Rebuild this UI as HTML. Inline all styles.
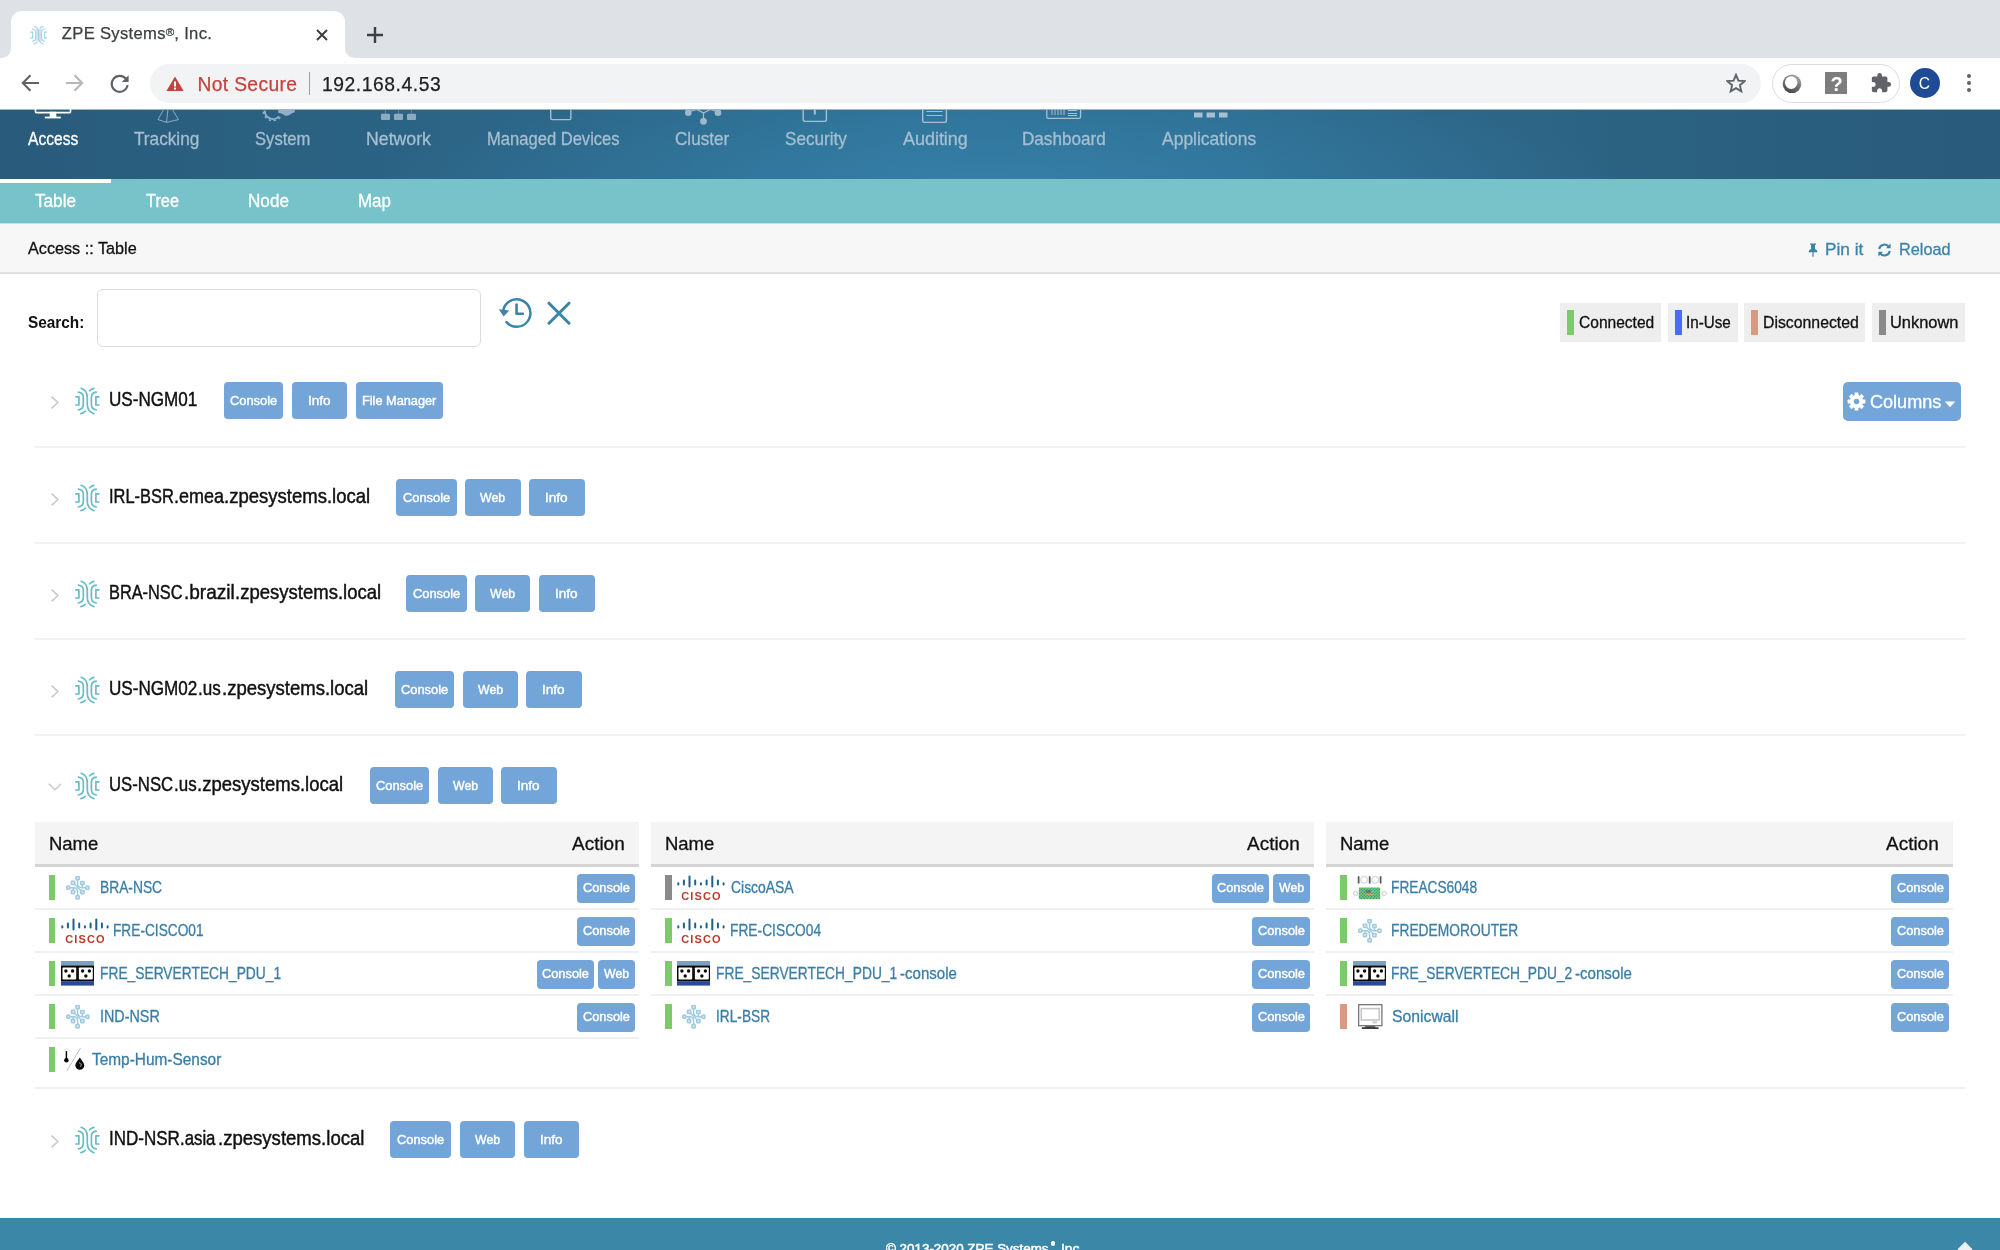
<!DOCTYPE html>
<html><head><meta charset="utf-8"><title>ZPE Systems, Inc.</title>
<style>
*{box-sizing:border-box;margin:0;padding:0}
html,body{width:2000px;height:1250px;overflow:hidden;background:#fff;font-family:"Liberation Sans",sans-serif;}
.abs{position:absolute}
.t{position:absolute;white-space:nowrap;line-height:1;transform-origin:0 0;}
#tabstrip{position:absolute;left:0;top:0;width:2000px;height:58px;background:#dee1e6}
#tab{position:absolute;left:11px;top:11px;width:334px;height:47px;background:#fff;border-radius:11px 11px 0 0}
#toolbar{position:absolute;left:0;top:58px;width:2000px;height:52px;background:#fff;border-bottom:1px solid #9fb5c4}
#omni{position:absolute;left:150px;top:64px;width:1611px;height:39px;border-radius:20px;background:#f1f3f4}
#nav{position:absolute;left:0;top:110px;width:2000px;height:69px;background:radial-gradient(ellipse 620px 110px at 50% 110%,rgba(60,140,182,0.55),rgba(60,140,182,0) 100%),linear-gradient(90deg,#295b7b 0%,#2b6384 20%,#2e7095 45%,#2e6e92 60%,#2b6080 85%,#295b7b 100%)}
#sub{position:absolute;left:0;top:179px;width:2000px;height:44px;background:#78c3ca}
#crumb{position:absolute;left:0;top:223px;width:2000px;height:51px;background:#f7f7f7;border-bottom:2px solid #e1e1e1;border-top:1px solid #c9dfe2}
#footer{position:absolute;left:0;top:1218px;width:2000px;height:32px;background:#3a87a8}
.btn{position:absolute;background:#74a5d9;color:#fff;border-radius:4px;text-align:center;white-space:nowrap;font-weight:bold}
.sep{position:absolute;left:35px;width:1930px;height:2px;background:#f1f1f1}
#root{position:absolute;left:0;top:0;width:2000px;height:1250px;overflow:hidden;will-change:transform;}

</style></head><body>
<svg width="0" height="0" style="position:absolute">
<defs>
<symbol id="zpe" viewBox="0 0 25 28">
<g fill="none" stroke="currentColor" stroke-width="1.7" stroke-linecap="round" stroke-linejoin="round">
<path d="M6.2 1.3 C10.5 2.8 12.3 6.5 12.3 10.5 L12.3 17.5 C12.3 21.5 14.5 25 19 26.7"/>
<path d="M3.4 5.2 C6.6 5.6 8.3 7.6 8.3 10.2 L8.3 17.6 C8.3 20.4 6.6 22.4 3.4 22.8"/>
<path d="M0.9 9.8 H3.9 V18 H0.9"/>
<path d="M5.9 26.6 C7.8 26.2 9.2 25.3 10.2 24.2"/>
<path d="M14.6 3.8 C15.6 2.7 17 1.8 18.9 1.4"/>
<path d="M21.2 5.2 C18 5.6 16.4 7.6 16.4 10.2 L16.4 17.6 C16.4 20.4 18 22.4 21.2 22.8"/>
<path d="M23.9 9.8 H20.9 V18 H23.9"/>
</g></symbol>
<symbol id="node" viewBox="0 0 24 24">
<g fill="none" stroke="#9fcadf" stroke-width="1.45" stroke-linecap="round">
<g fill="#d4e8f2" stroke="none"><rect x="9.9" y="0.6" width="3.4" height="3.2"/><rect x="5.3" y="5.2" width="3.4" height="3.2"/><rect x="14.7" y="5.4" width="3.4" height="3.2"/><rect x="0.7" y="10" width="3.3" height="3.3"/><rect x="19.7" y="10" width="3.4" height="3.4"/><rect x="5.3" y="14.5" width="3.4" height="3.2"/><rect x="14.7" y="14.5" width="3.4" height="3.2"/><rect x="9.9" y="19.6" width="3.4" height="3.3"/></g>
<path d="M11.6 3.8 V7.5 C11.6 10 13.5 11.7 16 11.7 H19.5"/>
<path d="M16.4 8.8 V11.5"/>
<path d="M8.8 8.4 L14.8 14.4"/>
<path d="M4 11.7 H7.2 C9.8 11.7 11.7 13.5 11.7 16 V19.5"/>
<path d="M7.2 14.3 V11.9"/>
<rect x="9.9" y="0.6" width="3.4" height="3.2" rx="0.6"/>
<rect x="5.3" y="5.2" width="3.4" height="3.2" rx="0.6"/>
<rect x="14.7" y="5.4" width="3.4" height="3.2" rx="0.6"/>
<rect x="0.7" y="10" width="3.3" height="3.3" rx="1.2"/>
<rect x="19.7" y="10" width="3.4" height="3.4" rx="1.2"/>
<rect x="5.3" y="14.5" width="3.4" height="3.2" rx="0.6"/>
<rect x="14.7" y="14.5" width="3.4" height="3.2" rx="0.6"/>
<rect x="9.9" y="19.6" width="3.4" height="3.3" rx="0.6"/>
</g></symbol>
<symbol id="cisco" viewBox="0 0 48 26">
<g stroke="#1f6085" stroke-width="2" stroke-linecap="round">
<path d="M1.3 8.2V9.6M6.9 5.4V9.6M12.5 1.4V11.6M18.2 5.4V9.6M23.9 8.2V9.6M29.6 5.4V9.6M35.3 1.4V11.6M40.9 5.4V9.6M46.6 8.2V9.6"/>
</g>
<text x="4.3" y="24.7" font-family="Liberation Sans, sans-serif" font-weight="bold" font-size="11" fill="#c0392f" textLength="39.3" lengthAdjust="spacing">CISCO</text>
</symbol>
<symbol id="pdu" viewBox="0 0 33.2 24.8">
<rect x="0" y="0" width="33.2" height="5" fill="#7da0be"/>
<rect x="0" y="4.6" width="33.2" height="15.8" fill="#0b0b0b"/>
<rect x="0" y="20.2" width="33.2" height="4.6" fill="#274b99"/>
<rect x="1.5" y="6.4" width="13.7" height="12.2" rx="0.8" fill="#fff"/>
<rect x="17.9" y="6.4" width="13.9" height="12.2" rx="0.8" fill="#fff"/>
<g fill="#0b0b0b"><circle cx="4.9" cy="10" r="1.7"/><circle cx="11.6" cy="10" r="1.7"/><circle cx="8.2" cy="15" r="1.7"/>
<circle cx="21.6" cy="10" r="1.7"/><circle cx="28.4" cy="10" r="1.7"/><circle cx="24.9" cy="15" r="1.7"/></g>
</symbol>
<pattern id="dots" width="3" height="3" patternUnits="userSpaceOnUse"><rect width="3" height="3" fill="#6fd15f"/><rect x="0.2" y="0.2" width="1.1" height="1.1" fill="#2a72c4"/><rect x="1.7" y="1.7" width="1.1" height="1.1" fill="#2a72c4"/></pattern>
<symbol id="acs" viewBox="0 0 34 25">
<g fill="none"><path d="M5.6 1.2V8.4M16.7 1.2V8.4M27.6 1.2V8.4" stroke="#555" stroke-width="1.7"/>
<ellipse cx="11.1" cy="4.8" rx="3.3" ry="3.4" stroke="#d9d9d9" stroke-width="1.3"/><ellipse cx="22.2" cy="4.8" rx="3.3" ry="3.4" stroke="#d9d9d9" stroke-width="1.3"/>
<circle cx="2.6" cy="18.4" r="2.1" stroke="#d6d6d6" stroke-width="1.2"/><circle cx="31.4" cy="18.4" r="2.1" stroke="#d6d6d6" stroke-width="1.2"/></g>
<rect x="5.8" y="12.6" width="21.4" height="11.6" rx="0.8" fill="url(#dots)"/>
<path d="M13.2 17.6 V14.6 L15 16.4 L16.6 14.8 L17.8 16.4 V17.6Z" fill="#6a5a6a"/>
<rect x="11" y="16.2" width="1.4" height="1" fill="#d9534f"/><rect x="18.6" y="16" width="2.4" height="0.9" fill="#e9a08f"/><rect x="13.4" y="19" width="7" height="0.9" fill="#e9a08f" opacity=".8"/>
</symbol>
<symbol id="mon" viewBox="0 0 25 26">
<rect x="0.7" y="0.7" width="23.2" height="21" fill="#fff" stroke="#6b6b6b" stroke-width="1.2"/>
<rect x="3.3" y="4.6" width="18" height="11.4" fill="#fff" stroke="#c4c6c4" stroke-width="1.6"/>
<rect x="14.5" y="17.4" width="4.8" height="2" fill="#c8c8c8"/>
<path d="M7.5 22.3 L6.8 23.2 H3.8 V24.9 H20.6 V23.2 H17.6 L16.9 22.3Z" fill="#3c3c3c"/>
</symbol>
<symbol id="temp" viewBox="0 0 24 25">
<circle cx="4.4" cy="3.2" r="1.7" fill="none" stroke="#ddd" stroke-width="0.9"/>
<path d="M4.4 4.8 V13" stroke="#000" stroke-width="1.4" stroke-linecap="round"/><circle cx="4.4" cy="13.3" r="2.2" fill="#000"/>
<path d="M18.4 1.2 L4.8 24" stroke="#bdbdbd" stroke-width="1"/>
<path d="M17.8 10.4 C19.4 13 22.3 15.6 22.3 18.3 A4.5 4.5 0 0 1 13.3 18.3 C13.3 15.600 16.200 13 17.800 10.400Z" fill="#0a0a0a"/>
<path d="M17 15.500 L19.500 17.500 L18.500 20" stroke="#777" stroke-width="1.2" fill="none"/>
</symbol>
</defs></svg>

<div id="root">
<div id="tabstrip"></div>
<div id="tab"></div>
<div id="toolbar"></div>
<div id="omni"></div>

<!-- tab curves -->
<svg class="abs" style="left:0;top:46px" width="360" height="12"><path d="M0 12 Q11 12 11 1 L11 12Z" fill="#fff"/><path d="M345 1 Q345 12 357 12 L345 12Z" fill="#fff"/></svg>
<!-- favicon -->
<svg class="abs" style="left:30px;top:24.600px;color:#a6d2e6" width="17.400" height="20.200" viewBox="0 0 25 28"><rect x="9" y="5" width="7" height="18" fill="#cfe6f1"/><use href="#zpe"/></svg>
<span class="t" id="tabtitle" style="left:61.8px;top:26px;font-size:16.6px;letter-spacing:0.32px;-webkit-text-stroke:0.25px #3c4043;color:#3c4043">ZPE Systems<span style="font-size:11.5px;position:relative;top:-3.5px;letter-spacing:0">&reg;</span>, Inc.</span>
<svg class="abs" style="left:315px;top:28px" width="14" height="14" viewBox="0 0 14 14" stroke="#3c4043" stroke-width="2" fill="none"><path d="M2 2 L12 12 M12 2 L2 12"/></svg>
<svg class="abs" style="left:366px;top:26px" width="18" height="18" viewBox="0 0 18 18" stroke="#3c4043" stroke-width="2.4" fill="none"><path d="M9 1 V17 M1 9 H17"/></svg>
<!-- nav buttons -->
<svg class="abs" style="left:21px;top:74px" width="19" height="18" viewBox="0 0 19 18" stroke="#5f6368" stroke-width="2.1" fill="none"><path d="M18 9 H2 M9.5 1.2 L1.8 9 L9.5 16.8"/></svg>
<svg class="abs" style="left:65px;top:74px" width="19" height="18" viewBox="0 0 19 18" stroke="#b4b7bb" stroke-width="2.1" fill="none"><path d="M1 9 H17 M9.5 1.2 L17.2 9 L9.5 16.8"/></svg>
<svg class="abs" style="left:109px;top:73px" width="22" height="21" viewBox="0 0 22 21" fill="none"><path d="M17.2 6.2 A8 8 0 1 0 18.6 12.2" stroke="#5f6368" stroke-width="2.1"/><path d="M19.6 2.2 V9 H12.8 Z" fill="#5f6368"/></svg>
<!-- warning -->
<svg class="abs" style="left:166px;top:76px" width="18" height="16" viewBox="0 0 18 16"><path d="M9 0.6 L17.6 15 H0.4 Z" fill="#c5433e"/><rect x="8" y="5.5" width="2" height="5" fill="#fff"/><rect x="8" y="11.6" width="2" height="2" fill="#fff"/></svg>
<span class="t" id="notsecure" style="left:197.5px;top:74.6px;font-size:19.3px;letter-spacing:0.33px;-webkit-text-stroke:0.25px #c5433e;color:#c5433e">Not Secure</span>
<div class="abs" style="left:309px;top:72px;width:1px;height:23px;background:#9aa0a6"></div>
<span class="t" id="url" style="left:322px;top:74.6px;font-size:19.3px;letter-spacing:0.55px;-webkit-text-stroke:0.25px #202124;color:#202124">192.168.4.53</span>
<!-- star -->
<svg class="abs" style="left:1726px;top:73px" width="20" height="20" viewBox="0 0 20 20" fill="none" stroke="#5f6368" stroke-width="1.9" stroke-linejoin="miter"><path d="M10 1.8 L12.4 7.6 L18.6 8.1 L13.9 12.2 L15.3 18.3 L10 15.1 L4.7 18.3 L6.1 12.2 L1.4 8.1 L7.6 7.6 Z"/></svg>
<!-- ext pill -->
<div class="abs" style="left:1772px;top:64px;width:128px;height:39px;border-radius:20px;border:1px solid #dadce0;background:#fff"></div>
<svg class="abs" style="left:1781px;top:73px" width="22" height="22" viewBox="0 0 22 22"><defs><linearGradient id="sph" x1="0.7" y1="0" x2="0.2" y2="1"><stop offset="0" stop-color="#a8a8a8"/><stop offset="0.55" stop-color="#6a6a6a"/><stop offset="1" stop-color="#444"/></linearGradient></defs><circle cx="11" cy="10.8" r="9.3" fill="url(#sph)"/><circle cx="10.2" cy="9.6" r="6.3" fill="#fff"/></svg>
<div class="abs" style="left:1825px;top:72px;width:22px;height:22px;background:#7d7d7d"></div>
<span class="t" style="left:1830.5px;top:73.5px;font-size:20px;font-weight:bold;color:#fff">?</span>
<svg class="abs" style="left:1870px;top:72px" width="22" height="22" viewBox="0 0 24 24"><path fill="#5f6368" d="M20.5 11H19V7c0-1.1-.9-2-2-2h-4V3.5a2.5 2.5 0 0 0-5 0V5H4c-1.1 0-2 .9-2 2v3.8h1.5c1.5 0 2.7 1.2 2.7 2.7S5 16.200 3.500 16.200H2V20c0 1.100.9 2 2 2h3.800v-1.500c0-1.500 1.200-2.700 2.700-2.700s2.700 1.200 2.700 2.700V22H17c1.100 0 2-.9 2-2v-4h1.500a2.500 2.500 0 0 0 0-5z"/></svg>
<div class="abs" style="left:1910px;top:68px;width:30px;height:30px;border-radius:15px;background:#1f4a96"></div>
<span class="t" style="left:1918.8px;top:75.5px;font-size:15.6px;color:#fff">C</span>
<div class="abs" style="left:1967px;top:74px;width:4px;height:4px;border-radius:2px;background:#5f6368"></div>
<div class="abs" style="left:1967px;top:81px;width:4px;height:4px;border-radius:2px;background:#5f6368"></div>
<div class="abs" style="left:1967px;top:88px;width:4px;height:4px;border-radius:2px;background:#5f6368"></div>

<div id="nav"></div><svg class="abs" style="left:0;top:109px" width="1300" height="18" viewBox="0 109 1300 18" fill="none">
<g stroke="#fff" stroke-width="1.6"><path d="M35.5 104 V111.8 Q35.500 112.600 36.300 112.600 H69.700 Q70.500 112.600 70.500 111.800 V104"/><path d="M50.5 112.600 H55.500 V116.600 H50.500Z" fill="#fff"/><path d="M44.800 117.500 H60.800" stroke-width="1.8"/></g>
<g stroke="#8dabc1" stroke-width="1"><path d="M164 109 L158 119.500 L166.500 122.400 L178.500 119.500 L172 109 M168 109 L166.500 122.400"/></g>
<g stroke="#8fb0c8" fill="none"><path d="M264.80 110.51 A8.2 8.2 0 0 0 279.09 116.29" stroke-width="1.900"/><path d="M263.24 111.65 A9.8 9.8 0 0 0 280.72 116.83" stroke-width="1.600" stroke-dasharray="2.400 2.600"/></g>
<path d="M278.200 110 H294.800 V112.300 Q292 112.800 290.600 114.300 Q288.200 116.400 285 115.500 Q282.400 113.400 278.200 112.800Z" fill="#8fb0c8"/>
<g fill="#8eaac0"><rect x="381" y="113.800" width="9" height="6.200" rx="1"/><rect x="394" y="113.800" width="9" height="6.200" rx="1"/><rect x="407" y="113.800" width="9" height="6.200" rx="1"/><rect x="385" y="110" width="0.800" height="4" opacity=".6"/><rect x="398" y="110" width="0.800" height="4" opacity=".6"/><rect x="411" y="110" width="0.800" height="4" opacity=".6"/></g>
<g stroke="#a6bfd1" stroke-width="1.400"><path d="M550.700 105 V118.200 Q550.700 119.600 552.100 119.600 H569.500 Q570.900 119.600 570.900 118.200 V105"/></g>
<g fill="#9fbace" stroke="#9fbace"><circle cx="688.300" cy="112.800" r="3.300" stroke="none"/><circle cx="718" cy="112.800" r="3.300" stroke="none"/><circle cx="703.500" cy="121.300" r="3.400" stroke="none"/><path d="M703.500 121 V113 L694 108 M703.500 113 L713 108 M690 111.500 L697 109.500 M717 111.500 L710 109.500" stroke-width="1.300" fill="none"/></g>
<g stroke="#a6bfd1" stroke-width="1.400"><path d="M803.200 105 V119.600 Q803.200 121.400 805 121.400 H824.600 Q826.400 121.400 826.400 119.600 V105"/><path d="M814.800 109 V114.500" stroke-width="2"/></g>
<g stroke="#a6bfd1" stroke-width="1.400"><path d="M922.700 105 V120.600 Q922.700 122.400 924.500 122.400 H944.600 Q946.400 122.400 946.400 120.600 V105"/><path d="M926.500 111.500 H942.500 M926.500 115.500 H942.500" stroke-width="1.100"/></g>
<g stroke="#a6bfd1" stroke-width="1.300"><path d="M1046.800 105 V116.800 Q1046.800 118.400 1048.400 118.400 H1079 Q1080.600 118.400 1080.600 116.800 V105"/><path d="M1052 109 V115 M1055 109 V115 M1058 109 V115 M1061 109 V115 M1064 109 V115" stroke-width="1"/><path d="M1068 110.500 H1077 M1068 113.500 H1077 M1068 115.500 H1077" stroke-width="1.200"/></g>
<g fill="#a6bfd1"><rect x="1194" y="112.500" width="8.500" height="5" /><rect x="1206.500" y="112.500" width="8.500" height="5"/><rect x="1219" y="112.500" width="8.500" height="5"/></g>
</svg><span class="t" style="left:28.00px;top:129.59px;font-size:18.5px;color:#fff;transform:scaleX(0.8421);-webkit-text-stroke:0.3px #fff;">Access</span><span class="t" style="left:134.00px;top:129.59px;font-size:18.5px;color:#a6bfd1;transform:scaleX(0.9291);-webkit-text-stroke:0.3px #a6bfd1;">Tracking</span><span class="t" style="left:255.00px;top:129.59px;font-size:18.5px;color:#a6bfd1;transform:scaleX(0.8977);-webkit-text-stroke:0.3px #a6bfd1;">System</span><span class="t" style="left:365.84px;top:129.59px;font-size:18.5px;color:#a6bfd1;transform:scaleX(0.9571);-webkit-text-stroke:0.3px #a6bfd1;">Network</span><span class="t" style="left:486.60px;top:129.59px;font-size:18.5px;color:#a6bfd1;transform:scaleX(0.8956);-webkit-text-stroke:0.3px #a6bfd1;">Managed Devices</span><span class="t" style="left:675.00px;top:129.59px;font-size:18.5px;color:#a6bfd1;transform:scaleX(0.9241);-webkit-text-stroke:0.3px #a6bfd1;">Cluster</span><span class="t" style="left:784.50px;top:129.59px;font-size:18.5px;color:#a6bfd1;transform:scaleX(0.9249);-webkit-text-stroke:0.3px #a6bfd1;">Security</span><span class="t" style="left:902.50px;top:129.59px;font-size:18.5px;color:#a6bfd1;transform:scaleX(0.9690);-webkit-text-stroke:0.3px #a6bfd1;">Auditing</span><span class="t" style="left:1022.08px;top:129.59px;font-size:18.5px;color:#a6bfd1;transform:scaleX(0.9247);-webkit-text-stroke:0.3px #a6bfd1;">Dashboard</span><span class="t" style="left:1162.00px;top:129.59px;font-size:18.5px;color:#a6bfd1;transform:scaleX(0.9447);-webkit-text-stroke:0.3px #a6bfd1;">Applications</span><div id="sub"></div><div class="abs" style="left:0;top:179px;width:111px;height:4px;background:#fff"></div><span class="t" style="left:35.00px;top:192.26px;font-size:18px;color:#fff;transform:scaleX(0.9530);-webkit-text-stroke:0.3px #fff;">Table</span><span class="t" style="left:146.00px;top:192.26px;font-size:18px;color:#fff;transform:scaleX(0.9083);-webkit-text-stroke:0.3px #fff;">Tree</span><span class="t" style="left:248.05px;top:192.26px;font-size:18px;color:#fff;transform:scaleX(0.9519);-webkit-text-stroke:0.3px #fff;">Node</span><span class="t" style="left:358.06px;top:192.26px;font-size:18px;color:#fff;transform:scaleX(0.9410);-webkit-text-stroke:0.3px #fff;">Map</span><div id="crumb"></div><span class="t" style="left:27.60px;top:239.94px;font-size:17.2px;color:#111;transform:scaleX(0.9424);-webkit-text-stroke:0.3px #111;">Access :: Table</span><svg class="abs" style="left:1807px;top:243px" width="12" height="15" viewBox="0 0 12 15"><path d="M3 0.500 H9 V1.800 H8 V6 Q10.500 7 10.500 9.200 H6.600 V13 L6 14.500 L5.400 13 V9.200 H1.500 Q1.500 7 4 6 V1.800 H3Z" fill="#3a84aa"/></svg><span class="t" style="left:1825.15px;top:241.22px;font-size:16.4px;color:#3a84aa;transform:scaleX(1.0534);-webkit-text-stroke:0.3px #3a84aa;">Pin it</span><svg class="abs" style="left:1877px;top:243px" width="15" height="14" viewBox="0 0 15 14" fill="none" stroke="#3a84aa" stroke-width="2.100"><path d="M2.200 6 A5.400 5.400 0 0 1 11.800 3.600"/><path d="M12.800 8 A5.400 5.400 0 0 1 3.200 10.400"/><path d="M13.600 0.600 V5.200 H9Z" fill="#3a84aa" stroke="none"/><path d="M1.400 13.400 V8.800 H6Z" fill="#3a84aa" stroke="none"/></svg><span class="t" style="left:1898.61px;top:241.22px;font-size:16.4px;color:#3a84aa;transform:scaleX(0.9916);-webkit-text-stroke:0.3px #3a84aa;">Reload</span><span class="t" style="left:28.00px;top:313.62px;font-size:16.4px;color:#111;transform:scaleX(0.9374);font-weight:bold;">Search:</span><div class="abs" style="left:97px;top:289px;width:384px;height:58px;border:1px solid #dcdcdc;border-radius:6px;background:#fff"></div><svg class="abs" style="left:497px;top:296px;overflow:visible" width="37" height="34" viewBox="-1 0 37 34" fill="none" stroke="#3a84aa" stroke-width="2.500"><path d="M5.250 14.450 A13.700 13.700 0 1 1 8.410 26.100" stroke-linecap="round"/><path d="M0.700 13.300 L11.300 14.600 L5.700 20.600Z" fill="#3a84aa" stroke="none"/><path d="M18.550 8.500 V17.800 H24.900" stroke-width="2.600" stroke-linecap="round" stroke-linejoin="round"/></svg><svg class="abs" style="left:547px;top:301px" width="25" height="25" viewBox="0 0 25 25" fill="none" stroke="#3a84aa" stroke-width="3" stroke-linecap="round"><path d="M2 2.200 L22 22.200 M22 2.200 L2 22.200"/></svg><div class="abs" style="left:1560px;top:303px;width:101px;height:38.500px;background:#eeeeee"></div><div class="abs" style="left:1567px;top:310px;width:7px;height:24.500px;background:#7cca6c"></div><span class="t" style="left:1578.60px;top:314.94px;font-size:15.9px;color:#111;transform:scaleX(0.9786);-webkit-text-stroke:0.3px #111;">Connected</span><div class="abs" style="left:1668px;top:303px;width:70px;height:38.500px;background:#eeeeee"></div><div class="abs" style="left:1675px;top:310px;width:7px;height:24.500px;background:#4a6cf7"></div><span class="t" style="left:1686.04px;top:314.94px;font-size:15.9px;color:#111;transform:scaleX(0.9572);-webkit-text-stroke:0.3px #111;">In-Use</span><div class="abs" style="left:1744.3px;top:303px;width:121.10000000000014px;height:38.500px;background:#eeeeee"></div><div class="abs" style="left:1751px;top:310px;width:7px;height:24.500px;background:#d79b84"></div><span class="t" style="left:1763.00px;top:314.94px;font-size:15.9px;color:#111;transform:scaleX(0.9953);-webkit-text-stroke:0.3px #111;">Disconnected</span><div class="abs" style="left:1872px;top:303px;width:93px;height:38.500px;background:#eeeeee"></div><div class="abs" style="left:1879px;top:310px;width:7px;height:24.500px;background:#8a8a8a"></div><span class="t" style="left:1890.37px;top:314.94px;font-size:15.9px;color:#111;transform:scaleX(1.0340);-webkit-text-stroke:0.3px #111;">Unknown</span><div class="abs" style="left:1843px;top:382px;width:118px;height:38.500px;border-radius:5px;background:#74a5d9"></div><svg class="abs" style="left:1847px;top:392px" width="19" height="19" viewBox="0 0 19 19"><g fill="#fff"><circle cx="9.500" cy="9.500" r="6.600"/><g id="teeth"><rect x="7.600" y="0.600" width="3.800" height="4" rx="0.600"/><rect x="7.600" y="14.400" width="3.800" height="4" rx="0.600"/><rect x="0.600" y="7.600" width="4" height="3.800" rx="0.600"/><rect x="14.400" y="7.600" width="4" height="3.800" rx="0.600"/></g><use href="#teeth" transform="rotate(45 9.500 9.500)"/></g><circle cx="9.500" cy="9.500" r="2.800" fill="#74a5d9"/></svg><span class="t" style="left:1870.00px;top:392.56px;font-size:18.6px;color:#fff;transform:scaleX(0.9717);-webkit-text-stroke:0.300px #fff;">Columns</span><svg class="abs" style="left:1944px;top:401.200px" width="12" height="7" viewBox="0 0 12 7"><path d="M0.800 0.500 H11.200 L6 6.200Z" fill="#fff"/></svg><svg class="abs" style="left:49.800px;top:394.5px" width="10" height="15" viewBox="0 0 10 15" fill="none" stroke="#c8c8c8" stroke-width="1.500"><path d="M1.600 1.600 L7.800 7.500 L1.600 13.400"/></svg><svg class="abs" style="left:75px;top:386.5px;color:#69bcc6" width="25" height="28"><use href="#zpe"/></svg><span class="t" style="left:108.74px;top:389.65px;font-size:19.9px;color:#111;transform:scaleX(0.8592);-webkit-text-stroke:0.45px #111;">US-NGM01</span><div class="abs" style="left:223.6px;top:381.8px;width:59.6px;height:37.400px;border-radius:4px;background:#74a5d9"></div><span class="t" style="left:230.10px;top:394.30px;font-size:13.7px;color:#fff;transform:scaleX(0.9394);-webkit-text-stroke:0.45px #fff;">Console</span><div class="abs" style="left:291.8px;top:381.8px;width:55.2px;height:37.400px;border-radius:4px;background:#74a5d9"></div><span class="t" style="left:307.81px;top:394.30px;font-size:13.7px;color:#fff;transform:scaleX(0.9902);-webkit-text-stroke:0.45px #fff;">Info</span><div class="abs" style="left:355.6px;top:381.8px;width:87.4px;height:37.400px;border-radius:4px;background:#74a5d9"></div><span class="t" style="left:362.37px;top:394.30px;font-size:13.7px;color:#fff;transform:scaleX(0.9304);-webkit-text-stroke:0.45px #fff;">File Manager</span><svg class="abs" style="left:49.800px;top:491.5px" width="10" height="15" viewBox="0 0 10 15" fill="none" stroke="#c8c8c8" stroke-width="1.500"><path d="M1.600 1.600 L7.800 7.500 L1.600 13.400"/></svg><svg class="abs" style="left:75px;top:483.5px;color:#69bcc6" width="25" height="28"><use href="#zpe"/></svg><span class="t" style="left:108.92px;top:486.65px;font-size:19.9px;color:#111;transform:scaleX(0.8267);-webkit-text-stroke:0.45px #111;">IRL-BSR</span><span class="t" style="left:174.09px;top:486.65px;font-size:19.9px;color:#111;transform:scaleX(0.9055);-webkit-text-stroke:0.45px #111;">.emea</span><span class="t" style="left:224.37px;top:486.65px;font-size:19.9px;color:#111;transform:scaleX(0.9315);-webkit-text-stroke:0.45px #111;">.zpesystems.local</span><div class="abs" style="left:395.8px;top:478.8px;width:61.0px;height:37.400px;border-radius:4px;background:#74a5d9"></div><span class="t" style="left:403.00px;top:491.30px;font-size:13.7px;color:#fff;transform:scaleX(0.9394);-webkit-text-stroke:0.45px #fff;">Console</span><div class="abs" style="left:465.2px;top:478.8px;width:55.6px;height:37.400px;border-radius:4px;background:#74a5d9"></div><span class="t" style="left:480.30px;top:491.30px;font-size:13.7px;color:#fff;transform:scaleX(0.8980);-webkit-text-stroke:0.45px #fff;">Web</span><div class="abs" style="left:529px;top:478.8px;width:55.8px;height:37.400px;border-radius:4px;background:#74a5d9"></div><span class="t" style="left:545.31px;top:491.30px;font-size:13.7px;color:#fff;transform:scaleX(0.9902);-webkit-text-stroke:0.45px #fff;">Info</span><svg class="abs" style="left:49.800px;top:587.5px" width="10" height="15" viewBox="0 0 10 15" fill="none" stroke="#c8c8c8" stroke-width="1.500"><path d="M1.600 1.600 L7.800 7.500 L1.600 13.400"/></svg><svg class="abs" style="left:75px;top:579.5px;color:#69bcc6" width="25" height="28"><use href="#zpe"/></svg><span class="t" style="left:108.93px;top:582.65px;font-size:19.9px;color:#111;transform:scaleX(0.8219);-webkit-text-stroke:0.45px #111;">BRA-NSC</span><span class="t" style="left:183.84px;top:582.65px;font-size:19.9px;color:#111;transform:scaleX(0.9566);-webkit-text-stroke:0.45px #111;">.brazil</span><span class="t" style="left:234.57px;top:582.65px;font-size:19.9px;color:#111;transform:scaleX(0.9309);-webkit-text-stroke:0.45px #111;">.zpesystems.local</span><div class="abs" style="left:405.5px;top:574.8px;width:61.0px;height:37.400px;border-radius:4px;background:#74a5d9"></div><span class="t" style="left:412.70px;top:587.30px;font-size:13.7px;color:#fff;transform:scaleX(0.9394);-webkit-text-stroke:0.45px #fff;">Console</span><div class="abs" style="left:475px;top:574.8px;width:55.2px;height:37.400px;border-radius:4px;background:#74a5d9"></div><span class="t" style="left:489.90px;top:587.30px;font-size:13.7px;color:#fff;transform:scaleX(0.8980);-webkit-text-stroke:0.45px #fff;">Web</span><div class="abs" style="left:539px;top:574.8px;width:55.5px;height:37.400px;border-radius:4px;background:#74a5d9"></div><span class="t" style="left:555.16px;top:587.30px;font-size:13.7px;color:#fff;transform:scaleX(0.9902);-webkit-text-stroke:0.45px #fff;">Info</span><svg class="abs" style="left:49.800px;top:683.5px" width="10" height="15" viewBox="0 0 10 15" fill="none" stroke="#c8c8c8" stroke-width="1.500"><path d="M1.600 1.600 L7.800 7.500 L1.600 13.400"/></svg><svg class="abs" style="left:75px;top:675.5px;color:#69bcc6" width="25" height="28"><use href="#zpe"/></svg><span class="t" style="left:108.89px;top:678.65px;font-size:19.9px;color:#111;transform:scaleX(0.8597);-webkit-text-stroke:0.45px #111;">US-NGM02</span><span class="t" style="left:198.44px;top:678.65px;font-size:19.9px;color:#111;transform:scaleX(0.8559);-webkit-text-stroke:0.45px #111;">.us</span><span class="t" style="left:221.87px;top:678.65px;font-size:19.9px;color:#111;transform:scaleX(0.9315);-webkit-text-stroke:0.45px #111;">.zpesystems.local</span><div class="abs" style="left:394.5px;top:670.8px;width:59.5px;height:37.400px;border-radius:4px;background:#74a5d9"></div><span class="t" style="left:400.95px;top:683.30px;font-size:13.7px;color:#fff;transform:scaleX(0.9394);-webkit-text-stroke:0.45px #fff;">Console</span><div class="abs" style="left:462.8px;top:670.8px;width:55.2px;height:37.400px;border-radius:4px;background:#74a5d9"></div><span class="t" style="left:477.70px;top:683.30px;font-size:13.7px;color:#fff;transform:scaleX(0.8980);-webkit-text-stroke:0.45px #fff;">Web</span><div class="abs" style="left:526.2px;top:670.8px;width:55.6px;height:37.400px;border-radius:4px;background:#74a5d9"></div><span class="t" style="left:542.41px;top:683.30px;font-size:13.7px;color:#fff;transform:scaleX(0.9902);-webkit-text-stroke:0.45px #fff;">Info</span><svg class="abs" style="left:46.700px;top:781.7px" width="16" height="10" viewBox="0 0 16 10" fill="none" stroke="#c8c8c8" stroke-width="1.500"><path d="M1.800 1.800 L8 7.800 L14.200 1.800"/></svg><svg class="abs" style="left:75px;top:771.5px;color:#69bcc6" width="25" height="28"><use href="#zpe"/></svg><span class="t" style="left:108.91px;top:774.65px;font-size:19.9px;color:#111;transform:scaleX(0.8413);-webkit-text-stroke:0.45px #111;">US-NSC</span><span class="t" style="left:173.85px;top:774.65px;font-size:19.9px;color:#111;transform:scaleX(0.8519);-webkit-text-stroke:0.45px #111;">.us</span><span class="t" style="left:197.27px;top:774.65px;font-size:19.9px;color:#111;transform:scaleX(0.9309);-webkit-text-stroke:0.45px #111;">.zpesystems.local</span><div class="abs" style="left:369.5px;top:766.8px;width:59.5px;height:37.400px;border-radius:4px;background:#74a5d9"></div><span class="t" style="left:375.95px;top:779.30px;font-size:13.7px;color:#fff;transform:scaleX(0.9394);-webkit-text-stroke:0.45px #fff;">Console</span><div class="abs" style="left:437.8px;top:766.8px;width:55.2px;height:37.400px;border-radius:4px;background:#74a5d9"></div><span class="t" style="left:452.70px;top:779.30px;font-size:13.7px;color:#fff;transform:scaleX(0.8980);-webkit-text-stroke:0.45px #fff;">Web</span><div class="abs" style="left:501.2px;top:766.8px;width:55.6px;height:37.400px;border-radius:4px;background:#74a5d9"></div><span class="t" style="left:517.41px;top:779.30px;font-size:13.7px;color:#fff;transform:scaleX(0.9902);-webkit-text-stroke:0.45px #fff;">Info</span><svg class="abs" style="left:49.800px;top:1133.5px" width="10" height="15" viewBox="0 0 10 15" fill="none" stroke="#c8c8c8" stroke-width="1.500"><path d="M1.600 1.600 L7.800 7.500 L1.600 13.400"/></svg><svg class="abs" style="left:75px;top:1125.5px;color:#69bcc6" width="25" height="28"><use href="#zpe"/></svg><span class="t" style="left:108.89px;top:1128.65px;font-size:19.9px;color:#111;transform:scaleX(0.8557);-webkit-text-stroke:0.45px #111;">IND-NSR</span><span class="t" style="left:180.46px;top:1128.65px;font-size:19.9px;color:#111;transform:scaleX(0.8438);-webkit-text-stroke:0.45px #111;">.asia</span><span class="t" style="left:217.67px;top:1128.65px;font-size:19.9px;color:#111;transform:scaleX(0.9328);-webkit-text-stroke:0.45px #111;">.zpesystems.local</span><div class="abs" style="left:390.2px;top:1120.8px;width:61.0px;height:37.400px;border-radius:4px;background:#74a5d9"></div><span class="t" style="left:397.40px;top:1133.30px;font-size:13.7px;color:#fff;transform:scaleX(0.9394);-webkit-text-stroke:0.45px #fff;">Console</span><div class="abs" style="left:459.8px;top:1120.8px;width:55.2px;height:37.400px;border-radius:4px;background:#74a5d9"></div><span class="t" style="left:474.70px;top:1133.30px;font-size:13.7px;color:#fff;transform:scaleX(0.8980);-webkit-text-stroke:0.45px #fff;">Web</span><div class="abs" style="left:523.5px;top:1120.8px;width:55.7px;height:37.400px;border-radius:4px;background:#74a5d9"></div><span class="t" style="left:539.76px;top:1133.30px;font-size:13.7px;color:#fff;transform:scaleX(0.9902);-webkit-text-stroke:0.45px #fff;">Info</span><div class="sep" style="top:445.5px"></div><div class="sep" style="top:541.5px"></div><div class="sep" style="top:637.5px"></div><div class="sep" style="top:733.5px"></div><div class="sep" style="top:1087px"></div><div class="abs" style="left:35px;top:822px;width:603.6px;height:42.500px;background:#f4f4f4"></div><div class="abs" style="left:35px;top:864px;width:603.6px;height:3px;background:#d4d4d4"></div><span class="t" style="left:49.00px;top:834.84px;font-size:18.5px;color:#111;transform:scaleX(0.9988);-webkit-text-stroke:0.3px #111;">Name</span><span class="t" style="left:572.40px;top:834.84px;font-size:18.5px;color:#111;transform:scaleX(1.0249);-webkit-text-stroke:0.3px #111;">Action</span><div class="abs" style="left:48.8px;top:875.0px;width:6.700px;height:25px;background:#7cca6c"></div><svg class="abs" style="left:66.2px;top:875.8px" width="24" height="24"><use href="#node"/></svg><span class="t" style="left:99.73px;top:880.04px;font-size:15.9px;color:#3a7ea6;transform:scaleX(0.8681);-webkit-text-stroke:0.3px #3a7ea6;">BRA-NSC</span><div class="abs" style="left:35px;top:908.2px;width:603.6px;height:1.800px;background:#f0f0f0"></div><div class="abs" style="left:577.0px;top:873.5px;width:57.6px;height:29px;border-radius:4px;background:#74a5d9"></div><span class="t" style="left:582.60px;top:880.90px;font-size:13.7px;color:#fff;transform:scaleX(0.9354);-webkit-text-stroke:0.45px #fff;">Console</span><div class="abs" style="left:48.8px;top:918.0px;width:6.700px;height:25px;background:#7cca6c"></div><svg class="abs" style="left:60.8px;top:918.0px" width="48" height="26"><use href="#cisco"/></svg><span class="t" style="left:113.34px;top:923.04px;font-size:15.9px;color:#3a7ea6;transform:scaleX(0.8615);-webkit-text-stroke:0.3px #3a7ea6;">FRE-CISCO01</span><div class="abs" style="left:35px;top:951.2px;width:603.6px;height:1.800px;background:#f0f0f0"></div><div class="abs" style="left:577.0px;top:916.5px;width:57.6px;height:29px;border-radius:4px;background:#74a5d9"></div><span class="t" style="left:582.60px;top:923.90px;font-size:13.7px;color:#fff;transform:scaleX(0.9354);-webkit-text-stroke:0.45px #fff;">Console</span><div class="abs" style="left:48.8px;top:961.0px;width:6.700px;height:25px;background:#7cca6c"></div><svg class="abs" style="left:61.2px;top:961.0px" width="33.200" height="24.800"><use href="#pdu"/></svg><span class="t" style="left:99.73px;top:966.04px;font-size:15.9px;color:#3a7ea6;transform:scaleX(0.8678);-webkit-text-stroke:0.3px #3a7ea6;">FRE_SERVERTECH_PDU_1</span><div class="abs" style="left:35px;top:994.2px;width:603.6px;height:1.800px;background:#f0f0f0"></div><div class="abs" style="left:598.4px;top:959.5px;width:36.2px;height:29px;border-radius:4px;background:#74a5d9"></div><span class="t" style="left:603.80px;top:966.90px;font-size:13.7px;color:#fff;transform:scaleX(0.8980);-webkit-text-stroke:0.45px #fff;">Web</span><div class="abs" style="left:536.6px;top:959.5px;width:57.6px;height:29px;border-radius:4px;background:#74a5d9"></div><span class="t" style="left:542.20px;top:966.90px;font-size:13.7px;color:#fff;transform:scaleX(0.9354);-webkit-text-stroke:0.45px #fff;">Console</span><div class="abs" style="left:48.8px;top:1004.0px;width:6.700px;height:25px;background:#7cca6c"></div><svg class="abs" style="left:66.2px;top:1004.8px" width="24" height="24"><use href="#node"/></svg><span class="t" style="left:99.70px;top:1009.04px;font-size:15.9px;color:#3a7ea6;transform:scaleX(0.9022);-webkit-text-stroke:0.3px #3a7ea6;">IND-NSR</span><div class="abs" style="left:35px;top:1037.2px;width:603.6px;height:1.800px;background:#f0f0f0"></div><div class="abs" style="left:577.0px;top:1002.5px;width:57.6px;height:29px;border-radius:4px;background:#74a5d9"></div><span class="t" style="left:582.60px;top:1009.90px;font-size:13.7px;color:#fff;transform:scaleX(0.9354);-webkit-text-stroke:0.45px #fff;">Console</span><div class="abs" style="left:48.8px;top:1047.0px;width:6.700px;height:25px;background:#7cca6c"></div><svg class="abs" style="left:62.0px;top:1047.0px" width="24" height="25"><use href="#temp"/></svg><span class="t" style="left:92.00px;top:1052.04px;font-size:15.9px;color:#3a7ea6;transform:scaleX(0.9698);-webkit-text-stroke:0.3px #3a7ea6;">Temp-Hum-Sensor</span><div class="abs" style="left:651.4px;top:822px;width:662.1999999999999px;height:42.500px;background:#f4f4f4"></div><div class="abs" style="left:651.4px;top:864px;width:662.1999999999999px;height:3px;background:#d4d4d4"></div><span class="t" style="left:665.40px;top:834.84px;font-size:18.5px;color:#111;transform:scaleX(0.9988);-webkit-text-stroke:0.3px #111;">Name</span><span class="t" style="left:1247.40px;top:834.84px;font-size:18.5px;color:#111;transform:scaleX(1.0249);-webkit-text-stroke:0.3px #111;">Action</span><div class="abs" style="left:665.0px;top:875.0px;width:6.700px;height:25px;background:#8a8a8a"></div><svg class="abs" style="left:677.0px;top:875.0px" width="48" height="26"><use href="#cisco"/></svg><span class="t" style="left:730.60px;top:880.04px;font-size:15.9px;color:#3a7ea6;transform:scaleX(0.8758);-webkit-text-stroke:0.3px #3a7ea6;">CiscoASA</span><div class="abs" style="left:651.4px;top:908.2px;width:662.1999999999999px;height:1.800px;background:#f0f0f0"></div><div class="abs" style="left:1273.4px;top:873.5px;width:36.2px;height:29px;border-radius:4px;background:#74a5d9"></div><span class="t" style="left:1278.80px;top:880.90px;font-size:13.7px;color:#fff;transform:scaleX(0.8980);-webkit-text-stroke:0.45px #fff;">Web</span><div class="abs" style="left:1211.6px;top:873.5px;width:57.6px;height:29px;border-radius:4px;background:#74a5d9"></div><span class="t" style="left:1217.20px;top:880.90px;font-size:13.7px;color:#fff;transform:scaleX(0.9354);-webkit-text-stroke:0.45px #fff;">Console</span><div class="abs" style="left:665.0px;top:918.0px;width:6.700px;height:25px;background:#7cca6c"></div><svg class="abs" style="left:677.0px;top:918.0px" width="48" height="26"><use href="#cisco"/></svg><span class="t" style="left:729.73px;top:923.04px;font-size:15.9px;color:#3a7ea6;transform:scaleX(0.8673);-webkit-text-stroke:0.3px #3a7ea6;">FRE-CISCO04</span><div class="abs" style="left:651.4px;top:951.2px;width:662.1999999999999px;height:1.800px;background:#f0f0f0"></div><div class="abs" style="left:1252.0px;top:916.5px;width:57.6px;height:29px;border-radius:4px;background:#74a5d9"></div><span class="t" style="left:1257.60px;top:923.90px;font-size:13.7px;color:#fff;transform:scaleX(0.9354);-webkit-text-stroke:0.45px #fff;">Console</span><div class="abs" style="left:665.0px;top:961.0px;width:6.700px;height:25px;background:#7cca6c"></div><svg class="abs" style="left:677.4px;top:961.0px" width="33.200" height="24.800"><use href="#pdu"/></svg><span class="t" style="left:716.38px;top:966.04px;font-size:15.9px;color:#3a7ea6;transform:scaleX(0.8681);-webkit-text-stroke:0.3px #3a7ea6;">FRE_SERVERTECH_PDU_1</span><span class="t" style="left:899.80px;top:966.04px;font-size:15.9px;color:#3a7ea6;transform:scaleX(0.9464);-webkit-text-stroke:0.3px #3a7ea6;">-console</span><div class="abs" style="left:651.4px;top:994.2px;width:662.1999999999999px;height:1.800px;background:#f0f0f0"></div><div class="abs" style="left:1252.0px;top:959.5px;width:57.6px;height:29px;border-radius:4px;background:#74a5d9"></div><span class="t" style="left:1257.60px;top:966.90px;font-size:13.7px;color:#fff;transform:scaleX(0.9354);-webkit-text-stroke:0.45px #fff;">Console</span><div class="abs" style="left:665.0px;top:1004.0px;width:6.700px;height:25px;background:#7cca6c"></div><svg class="abs" style="left:682.4px;top:1004.8px" width="24" height="24"><use href="#node"/></svg><span class="t" style="left:716.34px;top:1009.04px;font-size:15.9px;color:#3a7ea6;transform:scaleX(0.8625);-webkit-text-stroke:0.3px #3a7ea6;">IRL-BSR</span><div class="abs" style="left:1252.0px;top:1002.5px;width:57.6px;height:29px;border-radius:4px;background:#74a5d9"></div><span class="t" style="left:1257.60px;top:1009.90px;font-size:13.7px;color:#fff;transform:scaleX(0.9354);-webkit-text-stroke:0.45px #fff;">Console</span><div class="abs" style="left:1326.4px;top:822px;width:626.1999999999998px;height:42.500px;background:#f4f4f4"></div><div class="abs" style="left:1326.4px;top:864px;width:626.1999999999998px;height:3px;background:#d4d4d4"></div><span class="t" style="left:1340.40px;top:834.84px;font-size:18.5px;color:#111;transform:scaleX(0.9988);-webkit-text-stroke:0.3px #111;">Name</span><span class="t" style="left:1886.40px;top:834.84px;font-size:18.5px;color:#111;transform:scaleX(1.0249);-webkit-text-stroke:0.3px #111;">Action</span><div class="abs" style="left:1340.3px;top:875.0px;width:6.700px;height:25px;background:#7cca6c"></div><svg class="abs" style="left:1353.0px;top:875.0px" width="34" height="25"><use href="#acs"/></svg><span class="t" style="left:1391.34px;top:880.04px;font-size:15.9px;color:#3a7ea6;transform:scaleX(0.8629);-webkit-text-stroke:0.3px #3a7ea6;">FREACS6048</span><div class="abs" style="left:1326.4px;top:908.2px;width:626.1999999999998px;height:1.800px;background:#f0f0f0"></div><div class="abs" style="left:1891.0px;top:873.5px;width:57.6px;height:29px;border-radius:4px;background:#74a5d9"></div><span class="t" style="left:1896.60px;top:880.90px;font-size:13.7px;color:#fff;transform:scaleX(0.9354);-webkit-text-stroke:0.45px #fff;">Console</span><div class="abs" style="left:1340.3px;top:918.0px;width:6.700px;height:25px;background:#7cca6c"></div><svg class="abs" style="left:1357.7px;top:918.8px" width="24" height="24"><use href="#node"/></svg><span class="t" style="left:1391.33px;top:923.04px;font-size:15.9px;color:#3a7ea6;transform:scaleX(0.8685);-webkit-text-stroke:0.3px #3a7ea6;">FREDEMOROUTER</span><div class="abs" style="left:1326.4px;top:951.2px;width:626.1999999999998px;height:1.800px;background:#f0f0f0"></div><div class="abs" style="left:1891.0px;top:916.5px;width:57.6px;height:29px;border-radius:4px;background:#74a5d9"></div><span class="t" style="left:1896.60px;top:923.90px;font-size:13.7px;color:#fff;transform:scaleX(0.9354);-webkit-text-stroke:0.45px #fff;">Console</span><div class="abs" style="left:1340.3px;top:961.0px;width:6.700px;height:25px;background:#7cca6c"></div><svg class="abs" style="left:1352.7px;top:961.0px" width="33.200" height="24.800"><use href="#pdu"/></svg><span class="t" style="left:1391.38px;top:966.04px;font-size:15.9px;color:#3a7ea6;transform:scaleX(0.8681);-webkit-text-stroke:0.3px #3a7ea6;">FRE_SERVERTECH_PDU_2</span><span class="t" style="left:1574.80px;top:966.04px;font-size:15.9px;color:#3a7ea6;transform:scaleX(0.9464);-webkit-text-stroke:0.3px #3a7ea6;">-console</span><div class="abs" style="left:1326.4px;top:994.2px;width:626.1999999999998px;height:1.800px;background:#f0f0f0"></div><div class="abs" style="left:1891.0px;top:959.5px;width:57.6px;height:29px;border-radius:4px;background:#74a5d9"></div><span class="t" style="left:1896.60px;top:966.90px;font-size:13.7px;color:#fff;transform:scaleX(0.9354);-webkit-text-stroke:0.45px #fff;">Console</span><div class="abs" style="left:1340.3px;top:1004.0px;width:6.700px;height:25px;background:#d79b84"></div><svg class="abs" style="left:1357.6px;top:1004.0px" width="25" height="26"><use href="#mon"/></svg><span class="t" style="left:1392.20px;top:1009.04px;font-size:15.9px;color:#3a7ea6;transform:scaleX(0.9926);-webkit-text-stroke:0.3px #3a7ea6;">Sonicwall</span><div class="abs" style="left:1891.0px;top:1002.5px;width:57.6px;height:29px;border-radius:4px;background:#74a5d9"></div><span class="t" style="left:1896.60px;top:1009.90px;font-size:13.7px;color:#fff;transform:scaleX(0.9354);-webkit-text-stroke:0.45px #fff;">Console</span><div id="footer"></div><span class="t" style="left:886.00px;top:1241.80px;font-size:13px;color:#fff;transform:scaleX(1.0303);-webkit-text-stroke:0.5px #fff;">© 2013-2020 ZPE Systems</span><span class="t" style="left:1060.93px;top:1241.80px;font-size:13px;color:#fff;transform:scaleX(1.0688);-webkit-text-stroke:0.5px #fff;">Inc</span><div class="abs" style="left:1050.5px;top:1241px;width:4.5px;height:4.5px;border-radius:3px;background:#fff"></div><svg class="abs" style="left:1955px;top:1240px" width="20" height="10" viewBox="0 0 20 10"><path d="M10 1.800 L17.200 9 V10 H2.800 V9Z" fill="#eaf2f7"/></svg>
</div>
</body></html>
